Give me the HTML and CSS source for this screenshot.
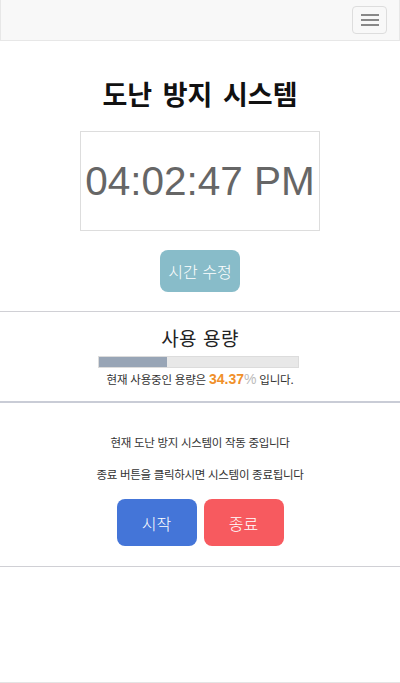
FILE: index.html
```html
<!DOCTYPE html>
<html lang="ko">
<head>
<meta charset="utf-8">
<link rel="stylesheet" href="styles.css">
</head>
<body>
<nav class="navbar">
  <button class="toggle" type="button">
    <span class="bar"></span><span class="bar"></span><span class="bar"></span>
  </button>
</nav>
<main class="page">
  <section class="clock-section">
    <h1 class="title">도난 방지 시스템</h1>
    <div class="clock">04:02:47 PM</div>
    <button class="btn btn-edit" type="button">시간 수정</button>
  </section>
  <hr class="rule">
  <section class="usage">
    <h2 class="usage-title">사용 용량</h2>
    <div class="progress"><div class="progress-fill" style="width:34.37%"></div></div>
    <p class="usage-text">현재 사용중인 용량은 <span class="pct">34.37</span><span class="pct-sign">%</span> 입니다.</p>
  </section>
  <hr class="rule rule-thick">
  <section class="control">
    <p class="msg">현재 도난 방지 시스템이 작동 중입니다</p>
    <p class="msg">종료 버튼을 클릭하시면 시스템이 종료됩니다</p>
    <div class="btn-row">
      <button class="btn btn-start" type="button">시작</button>
      <button class="btn btn-stop" type="button">종료</button>
    </div>
  </section>
  <hr class="rule">
  <div class="spacer"></div>
  <hr class="rule rule-bottom">
</main>
</body>
</html>
```
FILE: styles.css
```css
* { box-sizing: border-box; }
html, body { margin: 0; padding: 0; background: #fff; }
body {
  font-family: "Liberation Sans", "Noto Sans CJK KR", sans-serif;
  color: #333;
  width: 400px;
}
.navbar {
  height: 41px;
  background: #f8f8f8;
  border: 1px solid #e7e7e7;
  border-top: none;
  display: flex;
  justify-content: flex-end;
  align-items: center;
  padding-right: 12px;
}
.toggle {
  width: 35px;
  height: 28px;
  border: 1px solid #ddd;
  border-radius: 4px;
  background: transparent;
  display: flex;
  flex-direction: column;
  justify-content: center;
  align-items: center;
  gap: 3px;
  padding: 0;
  margin-top: -1px;
}
.toggle .bar {
  display: block;
  width: 18px;
  height: 2px;
  background: #888;
}
.page { display: flex; flex-direction: column; }
.clock-section {
  display: flex;
  flex-direction: column;
  align-items: center;
  padding-top: 34px;
  padding-bottom: 19px;
}
.title {
  margin: 0;
  font-family: "Noto Sans CJK KR", sans-serif;
  font-weight: 700;
  font-size: 27px;
  line-height: 37px;
  color: #111;
  letter-spacing: 0;
  word-spacing: 3px;
}
.clock {
  margin-top: 19px;
  width: 240px;
  height: 100px;
  border: 1px solid #ddd;
  display: flex;
  align-items: center;
  justify-content: center;
  font-family: "Liberation Sans", sans-serif;
  font-size: 40.5px;
  white-space: nowrap;
  color: #666;
}
.btn {
  border: none;
  color: #fff;
  font-family: "Noto Sans CJK KR", sans-serif;
  border-radius: 8px;
  padding: 0;
}
.btn-edit {
  margin-top: 19px;
  width: 80px;
  height: 42px;
  background: #88bcc9;
  font-size: 16px;
  font-weight: 300;
}
.rule {
  margin: 0;
  border: none;
  border-top: 1px solid #d0d0d5;
  width: 100%;
}
.rule-thick { border-top: 2px solid #c9ccd6; }
.rule-bottom { border-top: 1px solid #e4e4e4; }
.usage {
  display: flex;
  flex-direction: column;
  align-items: center;
  padding-top: 13px;
  padding-bottom: 13px;
}
.usage-title {
  margin: 0;
  font-family: "Noto Sans CJK KR", sans-serif;
  font-weight: 400;
  font-size: 19px;
  line-height: 26px;
  color: #222;
  letter-spacing: 0.5px;
}
.progress {
  margin-top: 5px;
  margin-right: 4px;
  width: 201px;
  height: 12px;
  background: #e8e8e8;
  border: 1px solid #dcdcdc;
  display: flex;
}
.progress-fill { background: #98a5b6; height: 100%; }
.usage-text {
  margin: 2px 0 0;
  font-family: "Noto Sans CJK KR", sans-serif;
  font-size: 11.5px;
  line-height: 18px;
  color: #333;
  letter-spacing: -0.2px;
}
.pct {
  font-family: "Liberation Sans", sans-serif;
  font-weight: 700;
  font-size: 14px;
  color: #f0902a;
  letter-spacing: 0;
}
.pct-sign {
  font-family: "Liberation Sans", sans-serif;
  font-size: 14px;
  color: #bbb;
}
.control {
  display: flex;
  flex-direction: column;
  align-items: center;
  padding-top: 30px;
  padding-bottom: 20px;
}
.msg {
  margin: 0 0 14px;
  font-family: "Noto Sans CJK KR", sans-serif;
  font-size: 11.5px;
  line-height: 18px;
  color: #333;
  letter-spacing: -0.3px;
}
.btn-row {
  display: flex;
  gap: 7px;
  margin-top: 2px;
}
.btn-start, .btn-stop {
  width: 80px;
  height: 47px;
  font-size: 16px;
  font-weight: 300;
}
.btn-start { background: #4475d8; }
.btn-stop { background: #f75a5f; }
.spacer { height: 115px; }
```
